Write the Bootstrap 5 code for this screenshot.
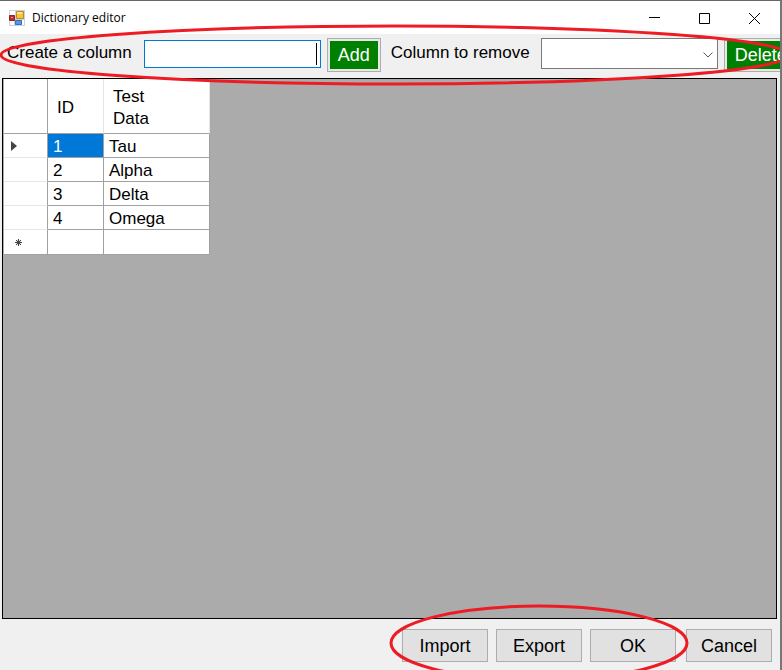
<!DOCTYPE html>
<html lang="en">
<head>
<meta charset="utf-8">
<meta name="viewport" content="width=device-width, initial-scale=1">
<title>Dictionary editor</title>
<link rel="stylesheet" href="https://cdn.jsdelivr.net/npm/bootstrap@5.3.0/dist/css/bootstrap.min.css">
<style>
body { font-family: "Liberation Sans", Arial, sans-serif; font-size: 17px; line-height: 22px; color: #000; background: #f0f0f0; }
.window { border-top: 1px solid #6b6767; border-right: 2px solid #777; }
.titlebar { height: 33px; padding-left: 9px; font: 12px/32px "Open Sans", "Noto Sans", sans-serif; }
.app-name { margin-left: 7px; }
.winbtn { width: 50px; height: 32px; border: 0; background: none; padding: 0; line-height: 1; }
.winbtn:last-child { margin-right: 1px; }
.toolbar { height: 44px; padding: 4px 0 0 7px; }
.toolbar label { line-height: 22px; padding-top: 4px; }
.column-name { width: 177px; height: 28px; margin: 2px 6px 0 12px; border: 1px solid #0078d7; border-radius: 0; padding: 0 3px; text-align: right; background: linear-gradient(#000, #000) right 3px center / 1px 22px no-repeat #fff; caret-color: transparent; outline: 0; }
.go { height: 34px; border: 1px solid #adadad; background: #e8e8e8; padding: 2px; font-size: 18px; line-height: 28px; color: #fff; }
.go span { display: block; background: #008000; padding: 0 8px; height: 28px; }
.remove-label { margin-left: 10px; }
.combo { width: 177px; height: 31px; margin: 0 6px 0 11px; border: 1px solid #7a7a7a; border-radius: 0; padding: 0 24px 0 4px; background-color: #fff; appearance: none; }
.combo-arrow { right: 11px; top: 14px; pointer-events: none; }
.grid-area { background: #ababab; border: 1px solid #000; margin: 0 3px 0 2px; }
.data-grid { width: 206px; table-layout: fixed; border-collapse: separate; border-spacing: 0; margin-left: 1px; background: #fff; font-size: 17px; line-height: 22px; }
.data-grid th, .data-grid td { border: solid #a0a0a0; border-width: 0 1px 1px 0; padding: 1px 0 0 5px; height: 24px; font-weight: 400; overflow: hidden; white-space: nowrap; }
.data-grid thead th { height: 55px; padding: 3px 8px 0 9px; border-right-color: #e5e5e5; white-space: normal; vertical-align: middle; }
.data-grid thead th:first-child { border-right-color: #a0a0a0; }
.data-grid tbody td { padding-top: 2px; line-height: 21px; }
.data-grid tbody th { padding-left: 7px; border-bottom-color: #e5e5e5; line-height: 0; vertical-align: middle; }
.data-grid tbody tr:last-child > * { border-bottom-color: #a0a0a0; height: 25px; }
.data-grid .picked { background: #0078d7; color: #fff; }
.footer-bar { height: 51px; padding: 10px 8px 0 0; }
.plain { width: 86px; height: 33px; border: 1px solid #adadad; background: #e1e1e1; padding: 0; margin-left: 8px; font-size: 18px; line-height: 32px; color: #000; }
.plain.apart { margin-left: 10px; }
.ring { pointer-events: none; fill: none; stroke: #ed1c24; stroke-width: 3; overflow: visible; z-index: 2; }
.ring-top { left: 1px; top: -8px; width: calc(100% + 8px); height: 58px; }
.ring-bottom { right: 93px; top: -13px; width: 296px; height: 74px; }
</style>
<script src="https://cdn.jsdelivr.net/npm/bootstrap@5.3.0/dist/js/bootstrap.bundle.min.js"></script>
</head>
<body>
<main class="window d-flex flex-column min-vh-100 overflow-hidden">
  <header class="titlebar d-flex align-items-center bg-white">
    <svg width="16" height="16" viewBox="0 0 16 16" aria-hidden="true">
      <path d="M0 0h16v16H0z" fill="#c9d3e0"/>
      <path d="M1 1h5v4H1zM1 11h4v4H1z" fill="#fff"/>
      <path d="M.5 5.500h5v5h-5z" fill="#c62a25" stroke="#8d2623"/>
      <path d="M2 7h2v1H2z" fill="#f29a8a"/>
      <path d="M7.500 1.500h7v7h-7z" fill="#f5c535" stroke="#c38a1c"/>
      <path d="M8 2h5v2H8z" fill="#ffe88a"/>
      <path d="M6.500 10.500h6v4h-6z" fill="#5795e5" stroke="#356fc1"/>
      <path d="M13 10h2v5h-2z" fill="#fff"/>
    </svg>
    <span class="app-name me-auto">Dictionary editor</span>
    <button class="winbtn" type="button" aria-label="Minimize"><svg width="11" height="11" fill="none" stroke="#000"><path d="M0 4.500h11"/></svg></button>
    <button class="winbtn" type="button" aria-label="Maximize"><svg width="11" height="11" fill="none" stroke="#000"><path d="M.5 .5h10v10H.5z"/></svg></button>
    <button class="winbtn" type="button" aria-label="Close"><svg width="11" height="11" fill="none" stroke="#000"><path d="M0 0l11 11M11 0L0 11"/></svg></button>
  </header>

  <form class="toolbar position-relative d-flex align-items-start flex-nowrap text-nowrap">
    <label for="newColumn">Create a column</label>
    <input class="column-name flex-shrink-0" id="newColumn" type="text">
    <button class="go flex-shrink-0" type="button"><span>Add</span></button>
    <label class="remove-label" for="oldColumn">Column to remove</label>
    <div class="position-relative flex-shrink-0">
      <select class="combo" id="oldColumn"><option></option></select>
      <svg class="combo-arrow position-absolute" width="10" height="6" fill="none" stroke="#555" aria-hidden="true"><path d="M.5 .5L5 5 9.500 .5"/></svg>
    </div>
    <button class="go flex-shrink-0" type="button"><span>Delete</span></button>
    <svg class="ring ring-top position-absolute" aria-hidden="true"><ellipse cx="50%" cy="50%" rx="50%" ry="50%"/></svg>
  </form>

  <section class="grid-area flex-grow-1">
    <table class="data-grid">
      <colgroup><col style="width:44px"><col style="width:56px"><col style="width:106px"></colgroup>
      <thead><tr><th scope="col"></th><th scope="col">ID</th><th scope="col">Test<br>Data</th></tr></thead>
      <tbody>
        <tr><th scope="row"><svg width="6" height="10" aria-label="Current row"><path d="M0 0l6 5-6 5z" fill="#444"/></svg></th><td class="picked">1</td><td>Tau</td></tr>
        <tr><th scope="row"></th><td>2</td><td>Alpha</td></tr>
        <tr><th scope="row"></th><td>3</td><td>Delta</td></tr>
        <tr><th scope="row"></th><td>4</td><td>Omega</td></tr>
        <tr><th scope="row"><svg class="ms-1" width="7" height="7" aria-label="New row"><path d="M3.500 0v7M0 3.500h7M1 1l5 5M6 1L1 6" stroke="#444"/><circle cx="3.500" cy="3.500" r="2" fill="#444"/></svg></th><td></td><td></td></tr>
      </tbody>
    </table>
  </section>

  <footer class="footer-bar position-relative d-flex justify-content-end">
    <button class="plain" type="button">Import</button>
    <button class="plain" type="button">Export</button>
    <button class="plain" type="button">OK</button>
    <button class="plain apart" type="button">Cancel</button>
    <svg class="ring ring-bottom position-absolute" aria-hidden="true"><ellipse cx="50%" cy="50%" rx="50%" ry="50%"/></svg>
  </footer>
</main>
</body>
</html>
